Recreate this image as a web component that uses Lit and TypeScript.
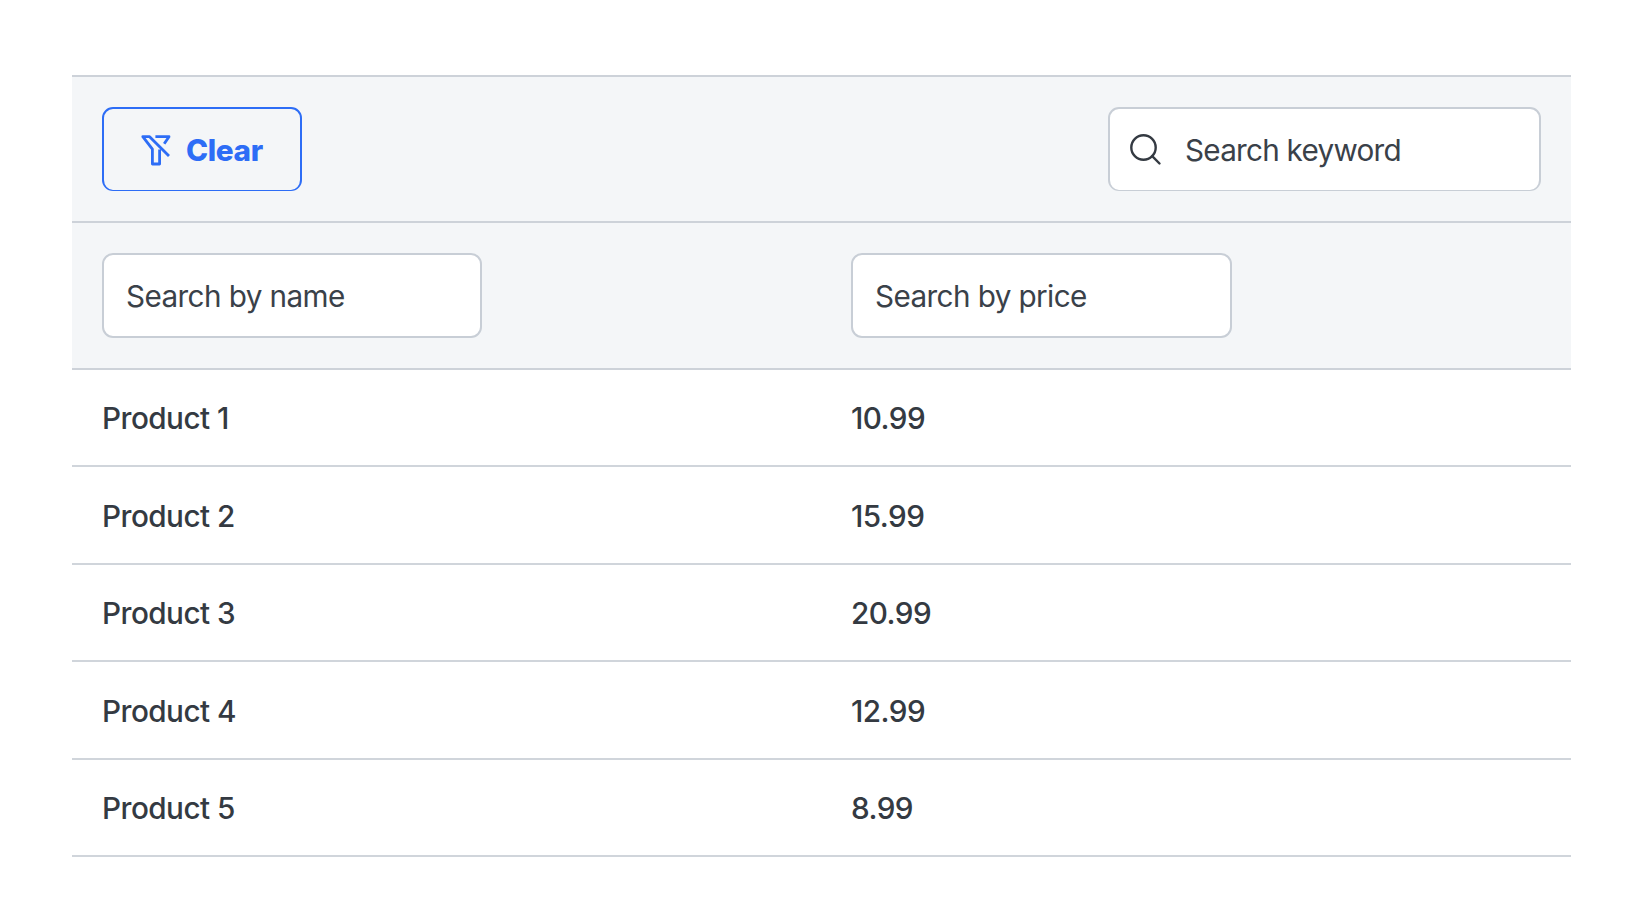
import { LitElement, html, css } from "lit";
import { customElement, state } from "lit/decorators.js";

interface Product {
  name: string;
  price: string;
}

@customElement("app-root")
export class AppRoot extends LitElement {
  static styles = css`
    :host {
      display: block;
      box-sizing: border-box;
      height: 914px;
      padding: 75px 79px 0 72px;
      background: #fff;
      color: #343a42;
      font: 500 29.7px/36px Inter, "Noto Sans", sans-serif;
      letter-spacing: -0.54px;
      overflow: hidden;
    }
    * {
      box-sizing: border-box;
    }
    .toolbar,
    .filters {
      background: #f4f6f8;
      border-bottom: 2px solid #cdd2d9;
    }
    .toolbar {
      display: flex;
      justify-content: space-between;
      align-items: flex-start;
      height: 148px;
      padding: 30px 30px 0;
      border-top: 2px solid #cdd2d9;
    }
    .clear {
      display: flex;
      align-items: center;
      gap: 14px;
      width: 200px;
      height: 84px;
      padding: 0 0 0 36px;
      border: 2px solid #2d6df6;
      border-bottom-width: 1px;
      border-radius: 11px;
      background: transparent;
      color: #2d6df6;
      font: inherit;
      font-weight: 800;
      letter-spacing: -0.35px;
    }
    .clear svg {
      width: 32px;
      height: 32px;
    }
    .field {
      display: flex;
      align-items: center;
      width: 380px;
      height: 85px;
      padding: 0 22px;
      border: 2px solid #c8ced6;
      border-radius: 11px;
      background: #fff;
    }
    .field.keyword {
      width: 433px;
      height: 84px;
      padding-left: 18px;
      gap: 22px;
      border-bottom-width: 1px;
    }
    .field svg {
      flex: none;
      width: 35px;
      height: 35px;
    }
    input {
      width: 100%;
      min-width: 0;
      padding: 0;
      border: 0;
      outline: 0;
      background: none;
      color: inherit;
      font: inherit;
      font-weight: 400;
      letter-spacing: -0.6px;
    }
    .keyword input {
      letter-spacing: -0.75px;
    }
    input::placeholder {
      color: #3a4149;
      opacity: 1;
    }
    .filters,
    .row {
      display: grid;
      grid-template-columns: 1fr 1fr;
      padding: 0 30px;
    }
    .filters {
      height: 147px;
      padding-top: 30px;
    }
    .filters > :last-child,
    .row > :last-child {
      margin-left: 29.5px;
    }
    .filters > :last-child {
      width: 381px;
    }
    .row {
      align-items: center;
      height: 97.4px;
      padding-top: 1.4px;
      border-bottom: 2px solid #d0d5db;
    }
  `;

  @state() private products: Product[] = [
    { name: "Product 1", price: "10.99" },
    { name: "Product 2", price: "15.99" },
    { name: "Product 3", price: "20.99" },
    { name: "Product 4", price: "12.99" },
    { name: "Product 5", price: "8.99" },
  ];

  render() {
    return html`
      <div class="toolbar">
        <button class="clear">
          <svg viewBox="0 0 32 32" fill="none" stroke="currentColor" stroke-width="2.8" stroke-linejoin="round">
            <path d="M15.4 2.7H29L24.2 9.8M29 22.1L9.6 2.7H2.8L12.4 15.2V30H19.6V15.5" />
          </svg>
          <span>Clear</span>
        </button>
        <label class="field keyword">
          <svg viewBox="0 0 35 35" fill="none" stroke="#343a42" stroke-width="2.4" stroke-linecap="round">
            <circle cx="15.5" cy="15.5" r="12.2" />
            <path d="M24.2 24.2L31.5 31.5" />
          </svg>
          <input placeholder="Search keyword" />
        </label>
      </div>
      <div class="filters">
        <label class="field"><input placeholder="Search by name" /></label>
        <label class="field"><input placeholder="Search by price" /></label>
      </div>
      ${this.products.map(
        (p) => html`<div class="row"><span>${p.name}</span><span>${p.price}</span></div>`
      )}
    `;
  }
}
